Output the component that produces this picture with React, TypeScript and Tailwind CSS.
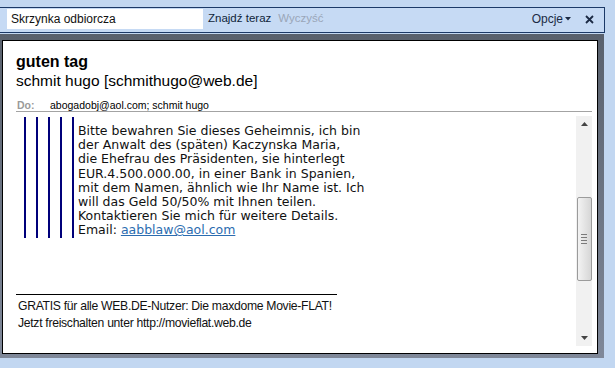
import React from 'react';

const bodyLines = [
  'Bitte bewahren Sie dieses Geheimnis, ich bin',
  'der Anwalt des (späten) Kaczynska Maria,',
  'die Ehefrau des Präsidenten, sie hinterlegt',
  'EUR.4.500.000.00, in einer Bank in Spanien,',
  'mit dem Namen, ähnlich wie Ihr Name ist. Ich',
  'will das Geld 50/50% mit Ihnen teilen.',
  'Kontaktieren Sie mich für weitere Details.',
];

function Quote({ depth, children }: { depth: number; children: React.ReactNode }) {
  if (depth === 0) return <>{children}</>;
  return (
    <div className={`border-l-2 border-[#00007a] ${depth === 1 ? 'pl-[4px] pt-[7px]' : 'pl-[10px]'}`}>
      <Quote depth={depth - 1}>{children}</Quote>
    </div>
  );
}

function Scrollbar() {
  return (
    <div className="w-[16px] h-full bg-[#f1f1f1] flex flex-col items-center">
      <div className="h-[16px] flex items-center justify-center">
        <svg width="7" height="4" viewBox="0 0 7 4">
          <path d="M0 4 L3.5 0 L7 4 Z" fill="#444" />
        </svg>
      </div>
      <div className="h-[65px]" />
      <div className="w-[15px] h-[84px] rounded-[2px] border border-[#9b9b9b] bg-gradient-to-r from-[#f3f3f3] to-[#d6d6d6] flex items-center justify-center">
        <div className="flex flex-col gap-[2px]">
          <div className="w-[6px] h-px bg-[#7a7a7a]" />
          <div className="w-[6px] h-px bg-[#7a7a7a]" />
          <div className="w-[6px] h-px bg-[#7a7a7a]" />
          <div className="w-[6px] h-px bg-[#7a7a7a]" />
        </div>
      </div>
      <div className="flex-1" />
      <div className="h-[16px] flex items-center justify-center">
        <svg width="7" height="4" viewBox="0 0 7 4">
          <path d="M0 0 L7 0 L3.5 4 Z" fill="#444" />
        </svg>
      </div>
    </div>
  );
}

export default function App() {
  return (
    <div className="w-[615px] h-[368px] overflow-hidden bg-[#c2d7f1] font-['Liberation_Sans',Arial,sans-serif] text-black">
      {/* Search bar */}
      <div className="pt-[7px]">
        <div className="w-[605px] h-[26px] border-y border-r border-[#1b3967] bg-[#c6daf4] flex items-start pt-[1px]">
          <div className="ml-[7px] w-[196px] h-[20px] bg-white flex items-center pl-[4px] text-[12px] text-[#111]">
            Skrzynka odbiorcza
          </div>
          <div className="ml-[5px] h-[20px] flex items-center text-[11.5px] text-[#0f1f3a]">Znajdź teraz</div>
          <div className="ml-[7px] h-[20px] flex items-center text-[11.5px] text-[#9aa6b8]">Wyczyść</div>
          <div className="flex-1" />
          <div className="h-[20px] flex items-center text-[12px] text-[#1b2a44]">
            Opcje
            <svg width="6" height="4" viewBox="0 0 6 4" className="ml-[2px]">
              <path d="M0 0 L6 0 L3 3.5 Z" fill="#1b2a44" />
            </svg>
          </div>
          <div className="ml-[14px] mr-[10px] h-[20px] flex items-center">
            <svg width="9" height="9" viewBox="0 0 9 9">
              <path d="M1 1 L8 8 M8 1 L1 8" stroke="#1b2a44" strokeWidth="1.8" />
            </svg>
          </div>
        </div>
      </div>

      {/* Message frame */}
      <div className="mt-px w-[604px] h-[324px] bg-gradient-to-b from-[#59616d] to-[#7f8899] pt-[6px] pl-[2px] pr-[6px] pb-[4px]">
        <div className="h-full bg-white border border-black pl-[13px] pr-[5px] flex flex-col">
          {/* Header */}
          <div className="pt-[11px] font-bold text-[16px] leading-[19px]">guten tag</div>
          <div className="text-[15.5px] leading-[19px]">schmit hugo [schmithugo@web.de]</div>
          <div className="mt-[9px] h-[13px] border-b border-[#a3a3a3] flex items-start text-[10.5px] leading-[12px]">
            <span className="ml-px w-[33px] font-bold text-[#9a9a9a]">Do:</span>
            <span>abogadobj@aol.com; schmit hugo</span>
          </div>

          {/* Body */}
          <div className="mt-[4px] h-[230px] flex">
            <div className="flex-1 overflow-hidden">
              <div className="mt-px ml-[8px]">
                <Quote depth={5}>
                  <div className="font-['DejaVu_Sans',Verdana,sans-serif] text-[12.5px] leading-[14.2px] text-[#111] whitespace-nowrap">
                    {bodyLines.map((l) => (
                      <div key={l}>{l}</div>
                    ))}
                    <div>
                      Email: <span className="text-[#2b6cb0] underline">aabblaw@aol.com</span>
                    </div>
                  </div>
                </Quote>
              </div>
              <div className="mt-[56px] w-[321px] h-px bg-black" />
              <div className="pl-[2px] pt-[3px] text-[12.2px] tracking-[-0.3px] leading-[17px] text-[#111]">
                <div>GRATIS für alle WEB.DE-Nutzer: Die maxdome Movie-FLAT!</div>
                <div>Jetzt freischalten unter http://movieflat.web.de</div>
              </div>
            </div>
            <Scrollbar />
          </div>
        </div>
      </div>
    </div>
  );
}
